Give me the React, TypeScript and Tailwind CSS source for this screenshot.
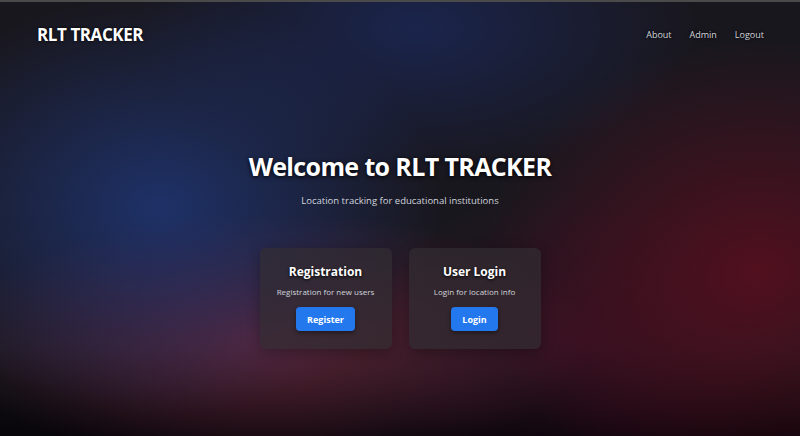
const NavLink: React.FC<{ label: string }> = ({ label }) => (
  <a href="#" className="text-[9px] text-gray-300 [text-shadow:0_0_3px_#000]">
    {label}
  </a>
);

interface CardProps {
  title: string;
  text: string;
  action: string;
}

const Card: React.FC<CardProps> = ({ title, text, action }) => (
  <div className="w-[132px] h-[101px] rounded-md bg-[rgba(50,44,50,0.7)] shadow-[0_4px_14px_rgba(0,0,0,0.3)] flex flex-col items-center pt-[18px]">
    <h2 className="text-[12px] font-bold text-white leading-none [text-shadow:0_1px_3px_#000]">
      {title}
    </h2>
    <p className="mt-[10px] text-[8px] text-gray-300 leading-none">{text}</p>
    <button className="mt-[11px] h-[24px] px-[11px] rounded bg-[#2378ee] text-white text-[9px] font-bold shadow-[0_2px_4px_rgba(0,0,0,0.4)]">
      {action}
    </button>
  </div>
);

export default function App() {
  return (
    <div
      className="w-[800px] h-[436px] overflow-hidden border-t-2 border-[#4a4a4a] font-['Open_Sans',sans-serif] bg-[#19171e] bg-[radial-gradient(ellipse_280px_210px_at_20%_47%,rgba(32,60,135,0.7),transparent),radial-gradient(ellipse_280px_150px_at_52%_6%,rgba(28,48,115,0.55),transparent),radial-gradient(ellipse_280px_230px_at_95%_62%,rgba(105,12,30,0.7),transparent),radial-gradient(ellipse_320px_130px_at_34%_78%,rgba(110,38,58,0.75),transparent),radial-gradient(ellipse_220px_150px_at_72%_78%,rgba(60,12,35,0.55),transparent),linear-gradient(to_bottom,transparent_80%,#07050a_100%)] flex flex-col"
    >
      <header className="flex items-center justify-between pl-[37px] pr-[36px] pt-[20px]">
        <h1 className="text-[17px] font-bold text-white tracking-tight [text-shadow:0_0_3px_#000]">
          RLT TRACKER
        </h1>
        <nav className="flex gap-[18px]">
          <NavLink label="About" />
          <NavLink label="Admin" />
          <NavLink label="Logout" />
        </nav>
      </header>

      <main className="flex flex-col items-center mt-[100px]">
        <h2 className="text-[25px] font-bold text-white tracking-tight [text-shadow:0_1px_4px_#000]">
          Welcome to RLT TRACKER
        </h2>
        <p className="mt-[9px] text-[9.5px] text-gray-300">
          Location tracking for educational institutions
        </p>
        <div className="flex gap-[17px] mt-[40px]">
          <Card title="Registration" text="Registration for new users" action="Register" />
          <Card title="User Login" text="Login for location info" action="Login" />
        </div>
      </main>
    </div>
  );
}
